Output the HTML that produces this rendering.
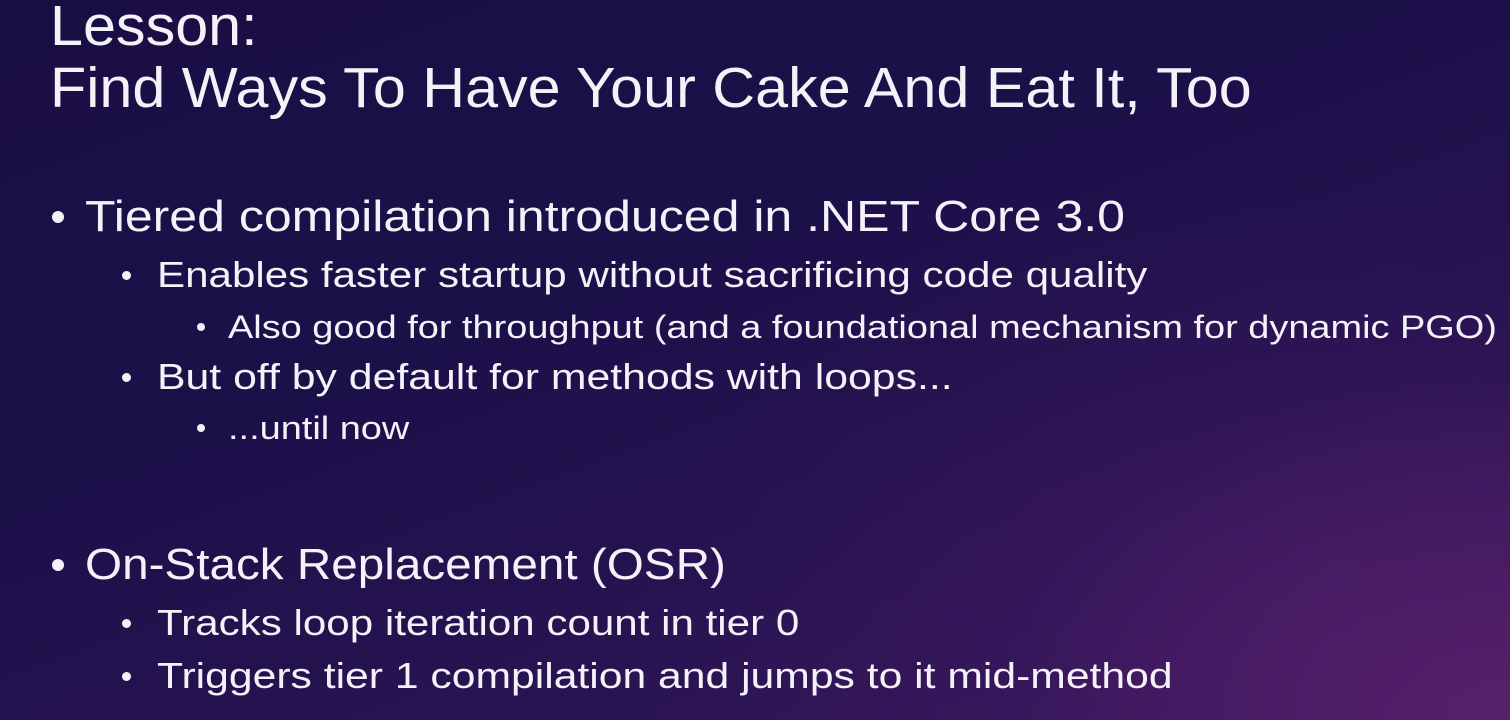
<!DOCTYPE html>
<html><head><meta charset="utf-8"><style>
html,body{margin:0;padding:0}
body{width:1510px;height:720px;overflow:hidden;position:relative;font-family:"Liberation Sans","DejaVu Sans",sans-serif;color:#f4f2f8;
background:
radial-gradient(ellipse 700px 500px at 1500px 720px, rgba(95,35,110,0.75), rgba(95,35,110,0) 70%),
radial-gradient(ellipse 900px 600px at 1300px 650px, rgba(70,25,100,0.6), rgba(70,25,100,0) 75%),
linear-gradient(160deg,#190e44 0%,#1c1049 40%,#261350 65%,#36185c 100%);}
.t{position:absolute;white-space:nowrap;left:50px;font-size:57px;line-height:60px;transform:scaleX(1.04);transform-origin:0 0}
.r{position:absolute;white-space:nowrap;transform-origin:0 0}
.l1{font-size:44px;line-height:50px;left:85px;transform:scaleX(1.137)}
.l2{font-size:36px;line-height:44px;left:157px;transform:scaleX(1.17)}
.l3{font-size:32px;line-height:40px;left:228px;transform:scaleX(1.185)}
.b{position:absolute;border-radius:50%;background:#f4f2f8}
</style></head><body>
<div class="t" style="top:-4px">Lesson:</div>
<div class="t" style="top:58px">Find Ways To Have Your Cake And Eat It, Too</div>

<div class="b" style="left:52px;top:211px;width:12px;height:12px"></div>
<div class="r l1" style="top:192px">Tiered compilation introduced in .NET Core 3.0</div>
<div class="b" style="left:122px;top:271px;width:9px;height:9px"></div>
<div class="r l2" style="top:253px">Enables faster startup without sacrificing code quality</div>
<div class="b" style="left:197px;top:323px;width:8px;height:8px"></div>
<div class="r l3" style="top:307px">Also good for throughput (and a foundational mechanism for dynamic PGO)</div>
<div class="b" style="left:122px;top:373px;width:9px;height:9px"></div>
<div class="r l2" style="top:355px;transform:scaleX(1.188)">But off by default for methods with loops...</div>
<div class="b" style="left:197px;top:424px;width:8px;height:8px"></div>
<div class="r l3" style="top:408px">...until now</div>

<div class="b" style="left:52px;top:559px;width:12px;height:12px"></div>
<div class="r l1" style="top:540px;transform:scaleX(1.083)">On-Stack Replacement (OSR)</div>
<div class="b" style="left:122px;top:619px;width:9px;height:9px"></div>
<div class="r l2" style="top:601px">Tracks loop iteration count in tier 0</div>
<div class="b" style="left:122px;top:672px;width:9px;height:9px"></div>
<div class="r l2" style="top:654px;transform:scaleX(1.185)">Triggers tier 1 compilation and jumps to it mid-method</div>
</body></html>
